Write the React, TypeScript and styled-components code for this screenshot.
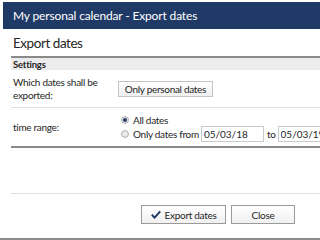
import React, { useState } from 'react';
import styled, { createGlobalStyle } from 'styled-components';

const GlobalStyle = createGlobalStyle`
  html, body {
    margin: 0;
    padding: 0;
    background: #ffffff;
    font-family: Lato, "Open Sans", sans-serif;
    color: #262626;
  }
  * { box-sizing: border-box; }
`;

const Frame = styled.div`
  width: 320px;
  height: 240px;
  overflow: hidden;
  padding-top: 2px;
  border-bottom: 2px solid #8c8c8c;
  display: flex;
  flex-direction: column;
`;

const TitleBar = styled.div`
  margin-left: 3px;
  height: 27px;
  flex-shrink: 0;
  background: #1f3a66;
  color: #ffffff;
  font-size: 12px;
  letter-spacing: -0.15px;
  display: flex;
  align-items: center;
  padding-left: 10px;
`;

const Body = styled.div`
  flex: 1;
  padding-left: 11px;
  display: flex;
  flex-direction: column;
`;

const Heading = styled.div`
  height: 29px;
  flex-shrink: 0;
  font-size: 13.5px;
  letter-spacing: -0.45px;
  display: flex;
  align-items: center;
  padding-left: 2px;
  border-bottom: 2px solid #8a8a8a;
`;

const SectionHeader = styled.div`
  height: 12px;
  flex-shrink: 0;
  background: #ececec;
  font-size: 9.5px;
  font-weight: bold;
  letter-spacing: -0.2px;
  padding-left: 2px;
  display: flex;
  align-items: center;
`;

const Row = styled.div<{ $height: number; $strong?: boolean }>`
  height: ${(p) => p.$height}px;
  flex-shrink: 0;
  display: flex;
  align-items: center;
  border-bottom: ${(p) => (p.$strong ? '2px solid #8a8a8a' : '1px solid #dedede')};
  font-size: 10px;
  letter-spacing: -0.3px;
`;

const Label = styled.div`
  width: 107px;
  flex-shrink: 0;
  padding-left: 2px;
  line-height: 13px;
`;

const Options = styled.div`
  display: flex;
  flex-direction: column;
  padding-left: 3px;
`;

const OptionLine = styled.label`
  display: flex;
  align-items: center;
  height: 14px;
  white-space: nowrap;
`;

const Radio = styled.span<{ $checked?: boolean }>`
  width: 8px;
  height: 8px;
  border-radius: 50%;
  border: 1px solid #b4b4b4;
  background: radial-gradient(circle, #f6f6f6 0%, #d6d6d6 100%);
  margin-right: 4px;
  display: flex;
  align-items: center;
  justify-content: center;
  &::after {
    content: '';
    width: 4px;
    height: 4px;
    border-radius: 50%;
    background: ${(p) => (p.$checked ? '#2b3f66' : 'transparent')};
  }
`;

const DateInput = styled.input`
  width: 63px;
  height: 16px;
  border: 1px solid #cacaca;
  font-family: inherit;
  font-size: 10px;
  color: #262626;
  padding: 0 2px;
  margin: 0 3px 0 2px;
  outline: none;
`;

const Button = styled.button<{ $width: number }>`
  width: ${(p) => p.$width}px;
  height: 19px;
  border: 1px solid #9a9a9a;
  background: linear-gradient(#ffffff, #f0f0f0);
  font-family: inherit;
  font-size: 10px;
  letter-spacing: -0.3px;
  color: #262626;
  display: flex;
  align-items: center;
  justify-content: center;
  gap: 4px;
  padding: 0;
`;

const SmallButton = styled(Button)`
  height: 16px;
  border-color: #c4c4c4;
`;

const Spacer = styled.div`
  height: 46px;
  flex-shrink: 0;
  border-bottom: 1px solid #dedede;
`;

const Footer = styled.div`
  display: flex;
  justify-content: flex-end;
  gap: 5px;
  padding: 11px 25px 0 0;
`;

const Check = () => (
  <svg width="10" height="9" viewBox="0 0 10 9">
    <path d="M0.8 4.8 L3.6 7.6 L9.2 1.4" fill="none" stroke="#1f3a66" strokeWidth="2" />
  </svg>
);

export default function App() {
  const [all, setAll] = useState(true);
  return (
    <>
      <GlobalStyle />
      <Frame>
        <TitleBar>My personal calendar - Export dates</TitleBar>
        <Body>
          <Heading>Export dates</Heading>
          <SectionHeader>Settings</SectionHeader>
          <Row $height={38}>
            <Label>
              Which dates shall be
              <br />
              exported:
            </Label>
            <SmallButton $width={95}>Only personal dates</SmallButton>
          </Row>
          <Row $height={40} $strong>
            <Label>time range:</Label>
            <Options>
              <OptionLine onClick={() => setAll(true)}>
                <Radio $checked={all} />
                All dates
              </OptionLine>
              <OptionLine onClick={() => setAll(false)}>
                <Radio $checked={!all} />
                Only dates from
                <DateInput defaultValue="05/03/18" />
                to
                <DateInput defaultValue="05/03/19" />
              </OptionLine>
            </Options>
          </Row>
          <Spacer />
          <Footer>
            <Button $width={85}>
              <Check />
              Export dates
            </Button>
            <Button $width={64}>Close</Button>
          </Footer>
        </Body>
      </Frame>
    </>
  );
}
